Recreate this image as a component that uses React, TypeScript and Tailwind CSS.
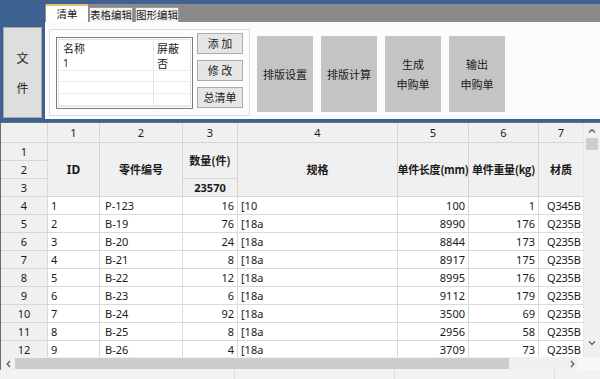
import React from "react";

const rows = [
  ["1", "P-123", "16", "[10", "100", "1", "Q345B"],
  ["2", "B-19", "76", "[18a", "8990", "176", "Q235B"],
  ["3", "B-20", "24", "[18a", "8844", "173", "Q235B"],
  ["4", "B-21", "8", "[18a", "8917", "175", "Q235B"],
  ["5", "B-22", "12", "[18a", "8995", "176", "Q235B"],
  ["6", "B-23", "6", "[18a", "9112", "179", "Q235B"],
  ["7", "B-24", "92", "[18a", "3500", "69", "Q235B"],
  ["8", "B-25", "8", "[18a", "2956", "58", "Q235B"],
  ["9", "B-26", "4", "[18a", "3709", "73", "Q235B"],
];

const cols = "grid grid-cols-[47px_52px_83px_55px_160px_71px_70px_45px]";
const hc = "bg-[#f0f0f0] border-r border-b border-[#d6d6d6] flex items-center justify-center";
const dc = "bg-white border-r border-b border-[#dadada] flex items-center";

export default function App() {
  return (
    <div
      className="w-[600px] h-[379px] overflow-hidden bg-white text-[#1a1a1a] flex flex-col"
      style={{ fontFamily: '"Noto Sans", "Noto Sans CJK SC", sans-serif' }}
    >
      {/* Top ribbon */}
      <div className="flex h-[123px] shrink-0 bg-[#3e6393] border-b border-[#5a6f88]">
        <div className="w-[45px] pl-[3px] pt-[27px]">
          <div className="w-[39px] h-[91px] bg-[#dedede] border border-[#a9a9a9] flex flex-col items-center justify-center gap-[12px] text-[12px] text-[#222]" style={{ fontFamily: '"Noto Sans CJK SC", sans-serif' }}>
            <span>文</span>
            <span>件</span>
          </div>
        </div>
        <div className="flex-1 pt-[4px] flex flex-col" style={{ fontFamily: '"Noto Sans CJK SC", sans-serif' }}>
          <div className="h-[18px] bg-[#8a8a8a] flex items-end pl-[1px] gap-[1px] text-[10.5px] leading-none whitespace-nowrap">
            <div className="w-[42px] h-[18px] bg-white border-t-2 border-[#e8c26a] flex items-center justify-center">清单</div>
            <div className="w-[44px] h-[15px] bg-[#f3f3f3] border border-b-0 border-[#9a9a9a] flex items-center justify-center">表格编辑</div>
            <div className="w-[44px] h-[15px] ml-[1px] bg-[#f3f3f3] border border-b-0 border-[#9a9a9a] flex items-center justify-center">图形编辑</div>
          </div>
          <div className="h-[97px] bg-[#fcfcfd] flex items-start pl-[4px] pt-[7px]">
            <div className="w-[201px] h-[87px] border border-[#dcdcdc] flex items-start pl-[6px] pt-[3px]">
              <div className="mt-[4px] w-[137px] h-[72px] border border-[#7d7d7d] bg-white p-[1px]">
                <div className="w-full h-full border border-[#e2e2e2] flex text-[11px] leading-[12px]">
                  <div className="w-[95px] border-r border-[#e4e4e4] flex flex-col">
                    <div className="h-[17px] pl-[4px] flex items-center">名称</div>
                    <div className="h-[14px] pl-[4px] flex items-center border-b border-[#ececec] text-[10px]" style={{ fontFamily: '"Noto Sans", sans-serif' }}>1</div>
                    <div className="h-[12px] border-b border-[#ececec]" />
                    <div className="h-[12px] border-b border-[#ececec]" />
                    <div className="h-[12px] border-b border-[#ececec]" />
                  </div>
                  <div className="flex-1 flex flex-col">
                    <div className="h-[17px] pl-[3px] flex items-center">屏蔽</div>
                    <div className="h-[14px] pl-[3px] flex items-center border-b border-[#ececec]">否</div>
                    <div className="h-[12px] border-b border-[#ececec]" />
                    <div className="h-[12px] border-b border-[#ececec]" />
                    <div className="h-[12px] border-b border-[#ececec]" />
                  </div>
                </div>
              </div>
              <div className="ml-[4px] flex flex-col gap-[6px] text-[11px]">
                <div className="w-[46px] h-[21px] bg-[#e5e5e5] border border-[#adadad] flex items-center justify-center">添 加</div>
                <div className="w-[46px] h-[21px] bg-[#e5e5e5] border border-[#adadad] flex items-center justify-center">修 改</div>
                <div className="w-[46px] h-[21px] bg-[#e5e5e5] border border-[#adadad] flex items-center justify-center">总清单</div>
              </div>
            </div>
            <div className="ml-[7px] mt-[7px] flex gap-[8px] text-[11px]">
              <div className="w-[56px] h-[76px] bg-[#c4c4c4] flex items-center justify-center">排版设置</div>
              <div className="w-[56px] h-[76px] bg-[#c4c4c4] flex items-center justify-center">排版计算</div>
              <div className="w-[56px] h-[76px] bg-[#c4c4c4] flex flex-col items-center justify-center gap-[4px]">
                <span>生成</span>
                <span>申购单</span>
              </div>
              <div className="w-[56px] h-[76px] bg-[#c4c4c4] flex flex-col items-center justify-center gap-[4px]">
                <span>输出</span>
                <span>申购单</span>
              </div>
            </div>
          </div>
        </div>
      </div>

      {/* Grid */}
      <div className="flex h-[234px] shrink-0 border-l border-[#6d6d6d]">
        <div className="w-[582px] overflow-hidden text-[11px] leading-none">
          <div className={`${cols} grid-rows-[20px_18px_18px_18px]`}>
            <div className={`${hc} col-start-1 row-start-1`} />
            <div className={`${hc} col-start-2 row-start-1`}>1</div>
            <div className={`${hc} col-start-3 row-start-1`}>2</div>
            <div className={`${hc} col-start-4 row-start-1`}>3</div>
            <div className={`${hc} col-start-5 row-start-1`}>4</div>
            <div className={`${hc} col-start-6 row-start-1`}>5</div>
            <div className={`${hc} col-start-7 row-start-1`}>6</div>
            <div className={`${hc} col-start-8 row-start-1`}>7</div>
            <div className={`${hc} col-start-1 row-start-2`}>1</div>
            <div className={`${hc} col-start-1 row-start-3`}>2</div>
            <div className={`${hc} col-start-1 row-start-4`}>3</div>
            <div className={`${hc} col-start-2 row-start-2 row-span-3 font-bold text-[12px]`}>ID</div>
            <div className={`${hc} col-start-3 row-start-2 row-span-3 font-bold`} style={{ fontFamily: '"Noto Sans CJK SC", sans-serif' }}>零件编号</div>
            <div className={`${hc} col-start-4 row-start-2 row-span-2 font-bold`} style={{ fontFamily: '"Noto Sans CJK SC", sans-serif' }}>数量(件)</div>
            <div className={`${hc} col-start-4 row-start-4 font-bold`}>23570</div>
            <div className={`${hc} col-start-5 row-start-2 row-span-3 font-bold`} style={{ fontFamily: '"Noto Sans CJK SC", sans-serif' }}>规格</div>
            <div className={`${hc} col-start-6 row-start-2 row-span-3 font-bold whitespace-nowrap tracking-[-0.3px]`} style={{ fontFamily: '"Noto Sans CJK SC", sans-serif' }}>单件长度(mm)</div>
            <div className={`${hc} col-start-7 row-start-2 row-span-3 font-bold whitespace-nowrap tracking-[-0.3px]`} style={{ fontFamily: '"Noto Sans CJK SC", sans-serif' }}>单件重量(kg)</div>
            <div className={`${hc} col-start-8 row-start-2 row-span-3 font-bold`} style={{ fontFamily: '"Noto Sans CJK SC", sans-serif' }}>材质</div>
          </div>
          {rows.map((r, i) => (
            <div key={i} className={`${cols} h-[18px]`}>
              <div className={hc}>{i + 4}</div>
              <div className={`${dc} pl-[3px]`}>{r[0]}</div>
              <div className={`${dc} pl-[5px]`}>{r[1]}</div>
              <div className={`${dc} justify-end pr-[3px]`}>{r[2]}</div>
              <div className={`${dc} pl-[3px]`}>{r[3]}</div>
              <div className={`${dc} justify-end pr-[3px]`}>{r[4]}</div>
              <div className={`${dc} justify-end pr-[3px]`}>{r[5]}</div>
              <div className={`${dc} pl-[8px] border-r-0 tracking-[-0.2px]`}>{r[6]}</div>
            </div>
          ))}
        </div>
        {/* vertical scrollbar */}
        <div className="w-[17px] bg-[#f0f0f0] flex flex-col items-center border-l border-[#e6e6e6]">
          <div className="h-[15px] flex items-center justify-center text-[#555]">
            <svg width="8" height="5" viewBox="0 0 8 5"><path d="M1 4.5 L4 1.5 L7 4.5" fill="none" stroke="#555" strokeWidth="1.2" /></svg>
          </div>
          <div className="w-[12px] h-[12px] bg-[#cdcdcd]" />
          <div className="flex-1" />
          <div className="h-[16px] flex items-start justify-center">
            <svg width="8" height="5" viewBox="0 0 8 5"><path d="M1 0.5 L4 3.5 L7 0.5" fill="none" stroke="#555" strokeWidth="1.2" /></svg>
          </div>
        </div>
      </div>

      {/* horizontal scrollbar */}
      <div className="h-[13px] shrink-0 flex bg-[#f0f0f0] border-l border-[#6d6d6d]">
        <div className="w-[14px] flex items-center justify-center">
          <svg width="5" height="8" viewBox="0 0 5 8"><path d="M4 1 L1.2 4 L4 7" fill="none" stroke="#555" strokeWidth="1.2" /></svg>
        </div>
        <div className="w-[494px] bg-[#cdcdcd] my-[1px]" />
        <div className="w-[68px] flex items-center justify-end pr-[2px]">
          <svg width="5" height="8" viewBox="0 0 5 8"><path d="M1 1 L3.8 4 L1 7" fill="none" stroke="#555" strokeWidth="1.2" /></svg>
        </div>
        <div className="flex-1 bg-[#f7f7f7]" />
      </div>

      {/* status bar */}
      <div className="flex-1 flex bg-[#f2f2f2]">
        <div className="w-[235px] border-r border-[#dcdcdc]" />
        <div className="w-[160px] border-r border-[#dcdcdc]" />
        <div className="w-[160px] border-r border-[#dcdcdc]" />
        <div className="flex-1" />
      </div>
    </div>
  );
}
